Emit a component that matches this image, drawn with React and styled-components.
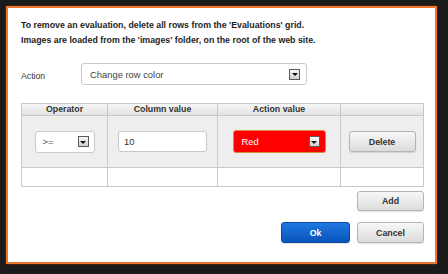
import React from "react";
import styled, { createGlobalStyle, css } from "styled-components";

const GlobalStyle = createGlobalStyle`
  html, body { margin: 0; padding: 0; }
  body {
    background: #1b1b1b;
    font-family: "Liberation Sans", Arial, sans-serif;
    width: 448px;
    height: 274px;
    overflow: hidden;
  }
`;

const Page = styled.div`
  padding: 6px;
`;

const Dialog = styled.div`
  box-sizing: border-box;
  width: 431px;
  height: 258px;
  background: #fff;
  border: 2px solid #ec7530;
  box-shadow: 0 0 2px 0 #8a2c0c;
  padding: 10px 12px 0 13px;
  display: flex;
  flex-direction: column;
`;

const Intro = styled.p`
  margin: 0;
  font-size: 8.8px;
  font-weight: bold;
  line-height: 15px;
  color: #1e1e1e;
`;

const ActionRow = styled.div`
  display: flex;
  align-items: center;
  margin-top: 15px;
`;

const Label = styled.span`
  width: 60px;
  font-size: 8.7px;
  color: #333;
  padding-top: 3px;
`;

const Dropdown = styled.div`
  box-sizing: border-box;
  width: ${(p) => p.$w}px;
  height: ${(p) => p.$h}px;
  display: flex;
  align-items: center;
  justify-content: space-between;
  padding: 0 ${(p) => p.$pr ?? 6}px 0 ${(p) => p.$pl ?? 8}px;
  border: 1px solid #c9c9c9;
  border-radius: 3px;
  background: #fff;
  font-size: 9.4px;
  color: #444;
  ${(p) =>
    p.$red &&
    css`
      background: #ff0000;
      border-color: #d98a3c;
      color: #fff;
    `}
`;

const Arrow = styled.span`
  box-sizing: border-box;
  width: 11px;
  height: 11px;
  border: 1px solid #5a5a5a;
  background: linear-gradient(#fbfbfb, #cfcfcf);
  display: flex;
  align-items: center;
  justify-content: center;
  &::after {
    content: "";
    width: 0;
    height: 0;
    border-left: 3px solid transparent;
    border-right: 3px solid transparent;
    border-top: 3px solid #111;
    margin-top: 1px;
  }
`;

const Grid = styled.div`
  margin-top: 18px;
  width: 403px;
  box-sizing: border-box;
  display: grid;
  grid-template-columns: 86px 110px 123px 83px;
  border-left: 1px solid #c9c9c9;
  border-top: 1px solid #c9c9c9;
`;

const Cell = styled.div`
  box-sizing: border-box;
  border-right: 1px solid #c9c9c9;
  border-bottom: 1px solid #c9c9c9;
  display: flex;
  align-items: center;
  justify-content: center;
`;

const HeadCell = styled(Cell)`
  height: 12px;
  background: linear-gradient(#f6f6f6, #e3e3e3);
  font-size: 8.8px;
  font-weight: bold;
  color: #333;
  line-height: 11px;
`;

const BodyCell = styled(Cell)`
  height: 52px;
  background: #eeeeee;
`;

const EmptyCell = styled(Cell)`
  height: 19px;
  background: #fff;
`;

const TextInput = styled.div`
  box-sizing: border-box;
  width: 89px;
  height: 21px;
  border: 1px solid #c9c9c9;
  border-radius: 3px;
  background: #fff;
  padding-left: 5px;
  display: flex;
  align-items: center;
  font-size: 9.4px;
  color: #333;
`;

const Actions = styled.div`
  display: flex;
  flex-direction: column;
  align-items: flex-end;
  width: 403px;
  margin-top: 4px;
  gap: 11px;
`;

const ButtonRow = styled.div`
  display: flex;
  gap: 7px;
`;

const Button = styled.button`
  box-sizing: border-box;
  width: ${(p) => p.$w || 67}px;
  height: ${(p) => p.$h || 21}px;
  padding: 0;
  border: 1px solid #b4b4b4;
  border-radius: 3px;
  background: linear-gradient(#f7f7f7, #dcdcdc);
  font-family: "Liberation Sans", Arial, sans-serif;
  font-size: 8.8px;
  font-weight: bold;
  color: #333;
  box-shadow: 0 1px 1px rgba(0, 0, 0, 0.12);
  ${(p) =>
    p.$primary &&
    css`
      background: linear-gradient(#1f78e0, #0955bb);
      border-color: #0a47a0;
      color: #fff;
    `}
`;

const Small = styled.span`
  color: ${(p) => p.$c || "inherit"};
`;

export default function App() {
  return (
    <>
      <GlobalStyle />
      <Page>
        <Dialog>
          <Intro>
            To remove an evaluation, delete all rows from the 'Evaluations' grid.
            <br />
            Images are loaded from the 'images' folder, on the root of the web site.
          </Intro>
          <ActionRow>
            <Label>Action</Label>
            <Dropdown $w={226} $h={22}>
              <span>Change row color</span>
              <Arrow />
            </Dropdown>
          </ActionRow>
          <Grid>
            <HeadCell>Operator</HeadCell>
            <HeadCell>Column value</HeadCell>
            <HeadCell>Action value</HeadCell>
            <HeadCell />
            <BodyCell>
              <Dropdown $w={60} $h={22} $pl={7} $pr={5}>
                <Small $c="#555">&gt;=</Small>
                <Arrow />
              </Dropdown>
            </BodyCell>
            <BodyCell>
              <TextInput>10</TextInput>
            </BodyCell>
            <BodyCell>
              <Dropdown $w={93} $h={23} $red $pl={8} $pr={5}>
                <span>Red</span>
                <Arrow />
              </Dropdown>
            </BodyCell>
            <BodyCell>
              <Button>Delete</Button>
            </BodyCell>
            <EmptyCell />
            <EmptyCell />
            <EmptyCell />
            <EmptyCell />
          </Grid>
          <Actions>
            <Button $h={20}>Add</Button>
            <ButtonRow>
              <Button $primary $w={69}>Ok</Button>
              <Button>Cancel</Button>
            </ButtonRow>
          </Actions>
        </Dialog>
      </Page>
    </>
  );
}
